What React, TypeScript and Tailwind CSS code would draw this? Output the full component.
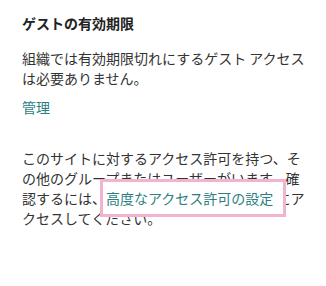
export default function App() {
  return (
    <div
      className="w-[326px] h-[286px] bg-white pl-[22px] pr-[16px] pt-[13px] text-[14px] leading-[20px] text-[#333333]"
      style={{ fontFamily: '"Noto Sans CJK JP", "Noto Sans", sans-serif' }}
    >
      <h2 className="font-bold text-[14px] leading-[20px] text-[#222222]">ゲストの有効期限</h2>
      <p className="mt-[15px]">組織では有効期限切れにするゲスト アクセスは必要ありません。</p>
      <a className="block mt-[9px] text-[#2b7f82]">管理</a>
      <p className="mt-[31px]">
        このサイトに対するアクセス許可を持つ、その他のグループまたはユーザーがいます。確認するには、
        <span className="relative text-[#2b7f82]">
          <span className="absolute left-[-6px] right-[-13px] top-[-9px] bottom-[-9px] bg-white border-[3px] border-[#f2b3cf]" />
          <span className="relative">高度なアクセス許可の設定</span>
        </span>{" "}
        にアクセスしてください。
      </p>
    </div>
  );
}
